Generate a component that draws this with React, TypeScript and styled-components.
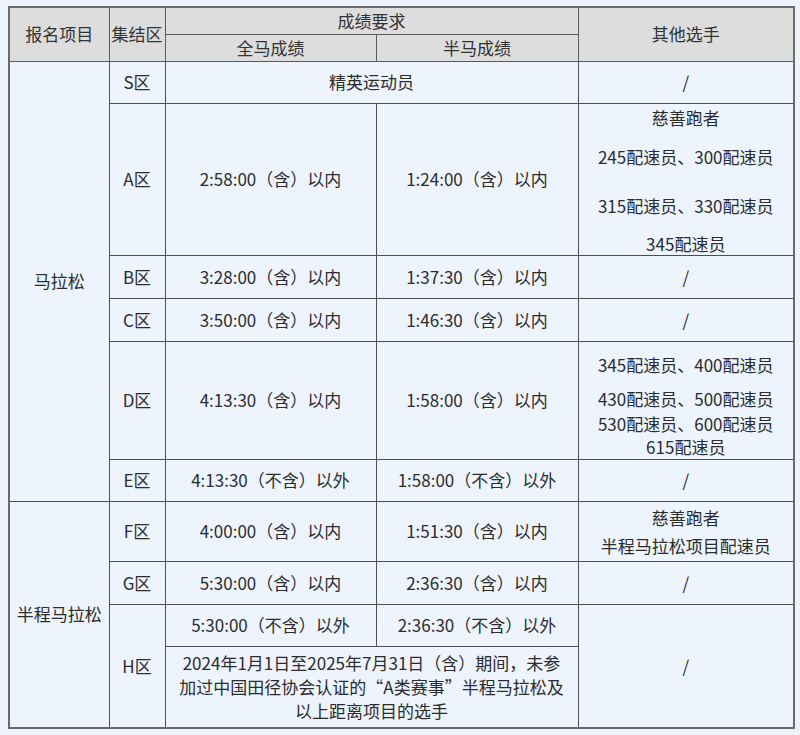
import React from "react";
import styled, { createGlobalStyle } from "styled-components";

const GlobalStyle = createGlobalStyle`
  html, body {
    margin: 0;
    padding: 0;
    background: #eef4fc;
  }
  body {
    font-family: "Noto Sans CJK SC", "Noto Sans", sans-serif;
    color: #2c2c2c;
  }
`;

const Page = styled.div`
  padding: 6px 0 0 8px;
`;

const Table = styled.table`
  width: 785px;
  border-collapse: collapse;
  table-layout: fixed;
  border: 2px solid #6a6a6a;
  font-size: 17px;
`;

const Row = styled.tr<{ $h: number }>`
  height: ${(p) => p.$h}px;
`;

const Head = styled.th`
  background: #dddddd;
  border: 1px solid #5a5a5a;
  font-weight: 400;
  color: #333;
  padding: 0;
  line-height: 22px;
  text-align: center;
  vertical-align: middle;
  white-space: nowrap;
`;

const Cell = styled.td<{ $top?: number }>`
  background: #edf4fd;
  border: 1px solid #4e4e4e;
  padding: ${(p) => (p.$top !== undefined ? `${p.$top}px 0 0` : "0")};
  line-height: 22px;
  text-align: center;
  vertical-align: ${(p) => (p.$top !== undefined ? "top" : "middle")};
  white-space: nowrap;
`;

const Line = styled.div<{ $gap?: number; $lh?: number }>`
  margin-top: ${(p) => p.$gap ?? 0}px;
  line-height: ${(p) => p.$lh ?? 22}px;
`;

const Note = styled.div`
  line-height: 24px;
  white-space: normal;
`;

const Quote = styled.span`
  font-feature-settings: "fwid";
`;

export default function App() {
  return (
    <Page lang="zh-CN">
      <GlobalStyle />
      <Table>
        <colgroup>
          <col style={{ width: 100 }} />
          <col style={{ width: 56 }} />
          <col style={{ width: 211 }} />
          <col style={{ width: 202 }} />
          <col style={{ width: 216 }} />
        </colgroup>
        <thead>
          <Row $h={27}>
            <Head rowSpan={2}>报名项目</Head>
            <Head rowSpan={2}>集结区</Head>
            <Head colSpan={2}>成绩要求</Head>
            <Head rowSpan={2}>其他选手</Head>
          </Row>
          <Row $h={27}>
            <Head>全马成绩</Head>
            <Head>半马成绩</Head>
          </Row>
        </thead>
        <tbody>
          <Row $h={42}>
            <Cell rowSpan={6}>马拉松</Cell>
            <Cell>S区</Cell>
            <Cell colSpan={2}>精英运动员</Cell>
            <Cell>/</Cell>
          </Row>
          <Row $h={152}>
            <Cell>A区</Cell>
            <Cell>2:58:00（含）以内</Cell>
            <Cell>1:24:00（含）以内</Cell>
            <Cell $top={3}>
              <Line>慈善跑者</Line>
              <Line $gap={17}>245配速员、300配速员</Line>
              <Line $gap={27}>315配速员、330配速员</Line>
              <Line $gap={16}>345配速员</Line>
            </Cell>
          </Row>
          <Row $h={43}>
            <Cell>B区</Cell>
            <Cell>3:28:00（含）以内</Cell>
            <Cell>1:37:30（含）以内</Cell>
            <Cell>/</Cell>
          </Row>
          <Row $h={43}>
            <Cell>C区</Cell>
            <Cell>3:50:00（含）以内</Cell>
            <Cell>1:46:30（含）以内</Cell>
            <Cell>/</Cell>
          </Row>
          <Row $h={118}>
            <Cell>D区</Cell>
            <Cell>4:13:30（含）以内</Cell>
            <Cell>1:58:00（含）以内</Cell>
            <Cell $top={11}>
              <Line $lh={23}>345配速员、400配速员</Line>
              <Line $lh={23} $gap={11}>430配速员、500配速员</Line>
              <Line $lh={23} $gap={2}>530配速员、600配速员</Line>
              <Line $lh={23}>615配速员</Line>
            </Cell>
          </Row>
          <Row $h={42}>
            <Cell>E区</Cell>
            <Cell>4:13:30（不含）以外</Cell>
            <Cell>1:58:00（不含）以外</Cell>
            <Cell>/</Cell>
          </Row>
          <Row $h={60}>
            <Cell rowSpan={4}>半程马拉松</Cell>
            <Cell>F区</Cell>
            <Cell>4:00:00（含）以内</Cell>
            <Cell>1:51:30（含）以内</Cell>
            <Cell $top={2}>
              <Line $lh={28}>慈善跑者</Line>
              <Line $lh={28}>半程马拉松项目配速员</Line>
            </Cell>
          </Row>
          <Row $h={43}>
            <Cell>G区</Cell>
            <Cell>5:30:00（含）以内</Cell>
            <Cell>2:36:30（含）以内</Cell>
            <Cell>/</Cell>
          </Row>
          <Row $h={42}>
            <Cell rowSpan={2}>H区</Cell>
            <Cell>5:30:00（不含）以外</Cell>
            <Cell>2:36:30（不含）以外</Cell>
            <Cell rowSpan={2}>/</Cell>
          </Row>
          <Row $h={82}>
            <Cell colSpan={2} $top={4}>
              <Note>
                2024年1月1日至2025年7月31日（含）期间，未参
                <br />
                加过中国田径协会认证的<Quote>“</Quote>A类赛事<Quote>”</Quote>半程马拉松及
                <br />
                以上距离项目的选手
              </Note>
            </Cell>
          </Row>
        </tbody>
      </Table>
    </Page>
  );
}
